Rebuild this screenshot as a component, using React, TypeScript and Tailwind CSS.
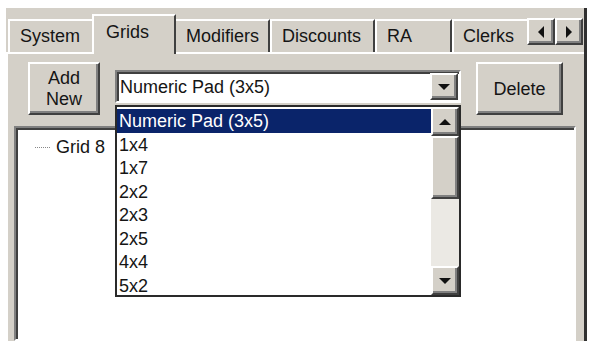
import { useState } from "react";

const raised =
  "border-2 border-t-white border-l-white border-r-[#404040] border-b-[#404040] shadow-[inset_-2px_-2px_0_#808080]";
const sunken =
  "border-2 border-t-[#808080] border-l-[#808080] border-r-white border-b-white shadow-[inset_2px_2px_0_#404040]";

const options = ["Numeric Pad (3x5)", "1x4", "1x7", "2x2", "2x3", "2x5", "4x4", "5x2"];

function Arrow({ dir }: { dir: "up" | "down" | "left" | "right" }) {
  const pts = {
    up: "0,6 6,0 12,6",
    down: "0,0 12,0 6,6",
    left: "6,0 6,12 0,6",
    right: "0,0 0,12 6,6",
  }[dir];
  const vert = dir === "up" || dir === "down";
  return (
    <svg width={vert ? 12 : 6} height={vert ? 6 : 12} viewBox={vert ? "0 0 12 6" : "0 0 6 12"}>
      <polygon points={pts} fill="#111" />
    </svg>
  );
}

function Tab({ label, w, active }: { label: string; w: number; active?: boolean }) {
  return (
    <div
      style={{ width: w }}
      className={
        active
          ? "relative z-10 -mx-[2px] mb-[-2px] h-[40px] shrink-0 border-l-2 border-t-2 border-r-2 border-l-white border-t-white border-r-[#404040] bg-[#d4d0c8] pt-[5px] pl-[12px]"
          : "h-[33px] shrink-0 border-l-2 border-t-2 border-r-2 border-l-white border-t-white border-r-[#404040] bg-[#d4d0c8] pt-[4px] pl-[10px]"
      }
    >
      {label}
    </div>
  );
}

export default function App() {
  const [sel] = useState(0);
  return (
    <div
      className="h-[359px] w-[613px] overflow-hidden bg-white pl-[6px] pt-[8px] text-[18px] leading-[22px] text-[#151515]"
      style={{ fontFamily: '"Liberation Sans", Arial, sans-serif' }}
    >
      <div className="flex h-[333px] w-[581px] flex-col border-r-[3px] border-r-[#303030] bg-[#d4d0c8]">
        {/* tab strip */}
        <div className="flex h-[44px] items-end overflow-visible pl-[2px]">
          <Tab label="System" w={86} />
          <Tab label="Grids" w={84} active />
          <Tab label="Modifiers" w={96} />
          <Tab label="Discounts" w={105} />
          <Tab label="RA" w={77} />
          <div className="relative h-[33px] w-[75px] shrink-0 overflow-hidden border-l-2 border-t-2 border-l-white border-t-white pt-[4px] pl-[9px]">
            Clerks
          </div>
          <div className="mb-[7px] flex">
            <div className={`flex h-[27px] w-[28px] items-center justify-center bg-[#d4d0c8] ${raised}`}>
              <Arrow dir="left" />
            </div>
            <div className={`flex h-[27px] w-[28px] items-center justify-center bg-[#d4d0c8] ${raised}`}>
              <Arrow dir="right" />
            </div>
          </div>
        </div>
        {/* tab body */}
        <div className="flex flex-1 flex-col border-l-2 border-t-2 border-l-white border-t-white pl-[4px]">
          <div className="flex h-[72px] items-start pt-[8px]">
            <div
              className={`ml-[16px] flex h-[53px] w-[72px] flex-col items-center justify-center leading-[21px] ${raised}`}
            >
              <span>Add</span>
              <span>New</span>
            </div>
            <div className="relative ml-[15px] mt-[8px]">
              <div className={`flex h-[33px] w-[346px] items-center bg-white pl-[3px] ${sunken}`}>
                <span className="flex-1">{options[sel]}</span>
                <div className={`mr-[1px] flex h-[27px] w-[28px] items-center justify-center bg-[#d4d0c8] ${raised}`}>
                  <Arrow dir="down" />
                </div>
              </div>
              {/* dropdown list */}
              <div className="absolute left-0 top-[35px] z-20 flex h-[192px] w-[346px] overflow-hidden border-2 border-[#2a2a2a] bg-white">
                <div className="flex-1 pt-[2px]">
                  {options.map((o, i) => (
                    <div
                      key={o}
                      className={
                        i === sel
                          ? "h-[23.5px] bg-[#0a246a] pl-[2px] leading-[25px] text-white"
                          : "h-[23.5px] pl-[2px] leading-[25px]"
                      }
                    >
                      {o}
                    </div>
                  ))}
                </div>
                <div className="flex w-[28px] flex-col">
                  <div className={`flex h-[29px] items-center justify-center bg-[#d4d0c8] ${raised}`}>
                    <Arrow dir="up" />
                  </div>
                  <div className={`h-[63px] bg-[#d4d0c8] ${raised}`} />
                  <div className="flex-1 bg-[#ebe9e4]" />
                  <div className={`flex h-[29px] items-center justify-center bg-[#d4d0c8] ${raised}`}>
                    <Arrow dir="down" />
                  </div>
                </div>
              </div>
            </div>
            <div className={`ml-[15px] flex h-[53px] w-[87px] items-center justify-center ${raised}`}>
              Delete
            </div>
          </div>
          {/* tree view */}
          <div className={`ml-[2px] mr-[8px] flex-1 bg-white pl-[19px] pt-[8px] ${sunken}`}>
            <div className="flex items-center">
              <span className="mr-[6px] w-[15px] border-t border-dotted border-[#888]" />
              <span>Grid 8</span>
            </div>
          </div>
        </div>
      </div>
    </div>
  );
}
